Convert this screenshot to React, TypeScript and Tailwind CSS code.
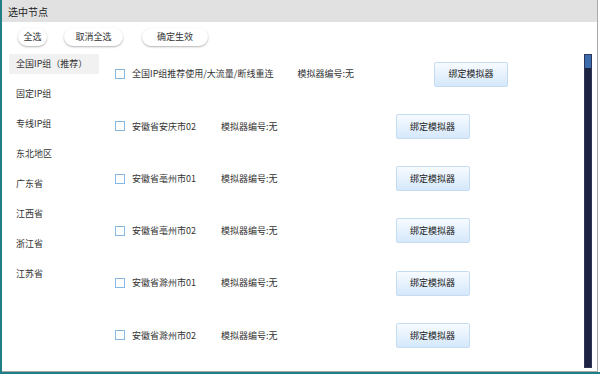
import React from 'react';

const groups = ['全国IP组（推荐）', '固定IP组', '专线IP组', '东北地区', '广东省', '江西省', '浙江省', '江苏省'];

interface Node {
  name: string;
  label: string;
  wide?: boolean;
}

const nodes: Node[] = [
  { name: '全国IP组推荐使用/大流量/断线重连', label: '模拟器编号:无', wide: true },
  { name: '安徽省安庆市02', label: '模拟器编号:无' },
  { name: '安徽省亳州市01', label: '模拟器编号:无' },
  { name: '安徽省亳州市02', label: '模拟器编号:无' },
  { name: '安徽省滁州市01', label: '模拟器编号:无' },
  { name: '安徽省滁州市02', label: '模拟器编号:无' },
];

function PillButton({ children, w }: { children: React.ReactNode; w: string }) {
  return (
    <button
      type="button"
      className={`${w} h-[18px] rounded-full bg-white text-[9px] text-[#333] shadow-[0_1px_2px_rgba(0,0,0,0.3)] flex items-center justify-center`}
    >
      {children}
    </button>
  );
}

function NodeRow({ node }: { node: Node }) {
  return (
    <div className="h-[26px] flex items-center">
      <span className="w-[10px] h-[10px] border border-[#86b9e3] bg-white shrink-0" />
      <span className="ml-[7px] text-[9px] text-[#333] whitespace-nowrap">{node.name}</span>
      <span className={`${node.wide ? 'ml-[24px]' : 'ml-[25px]'} text-[9px] text-[#333] whitespace-nowrap`}>{node.label}</span>
      <button
        type="button"
        className={`${node.wide ? 'ml-[80px]' : 'ml-[118px]'} w-[74px] h-[25px] rounded-[2px] border border-[#c6dcf1] bg-gradient-to-b from-[#f7fbff] to-[#d5e8fb] text-[9px] text-[#222] shrink-0`}
      >
        绑定模拟器
      </button>
    </div>
  );
}

export default function App() {
  return (
    <div className="w-[600px] h-[374px] bg-white border-l-2 border-b-2 border-[#1f7e86] font-['Noto_Sans_CJK_SC','Noto_Sans',sans-serif]">
      <div className="w-[596px] h-[372px] border-r border-b border-[#a9a9a9] flex flex-col">
        <div className="h-[22px] bg-[#e1e1e1] pl-[6px] flex items-center text-[10px] text-[#222]">选中节点</div>
        <div className="mt-[6px] pl-[16px] flex gap-[17px]">
          <PillButton w="w-[29px]">全选</PillButton>
          <div className="flex gap-[19px]">
            <PillButton w="w-[59px]">取消全选</PillButton>
            <PillButton w="w-[66px]">确定生效</PillButton>
          </div>
        </div>
        <div className="mt-[8px] flex flex-1 min-h-0 pr-[5px] pb-[3px]">
          <div className="pl-[7px] w-[97px] flex flex-col gap-[10px]">
            {groups.map((g, i) => (
              <div
                key={g}
                className={`h-[20px] pl-[7px] flex items-center text-[9px] text-[#333] whitespace-nowrap ${i === 0 ? 'bg-[#f1f1f1]' : ''}`}
              >
                {g}
              </div>
            ))}
          </div>
          <div className="ml-[16px] pt-[7px] flex-1 flex flex-col gap-[26.25px]">
            {nodes.map((n) => (
              <NodeRow key={n.name} node={n} />
            ))}
          </div>
          <div className="w-[8px] bg-[#1d2442] border border-[#2e3758] flex flex-col">
            <div className="h-[13px] bg-[#3b6cad]" />
          </div>
        </div>
      </div>
    </div>
  );
}
